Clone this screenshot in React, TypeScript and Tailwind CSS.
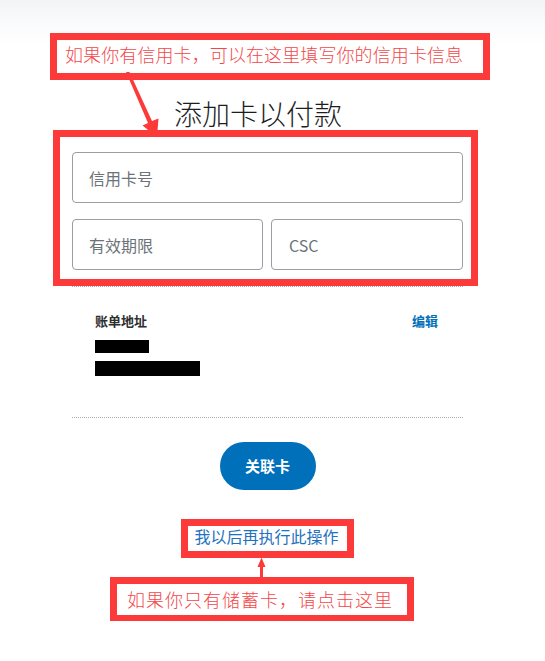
import React from "react";

const cjk = "font-['Noto_Sans_CJK_SC','Noto_Sans',sans-serif]";

export default function App() {
  return (
    <div
      className={`relative w-[545px] h-[661px] overflow-hidden bg-[linear-gradient(to_bottom,#f3f4f7_0px,#fafbfc_25px,#ffffff_45px)] ${cjk}`}
    >
      <div className="ml-[72px] w-[391px] flex flex-col">
        <h1 className="mt-[95px] h-[36px] leading-[36px] text-[28px] font-light text-[#1b1d1f] text-center pr-[19px]">
          添加卡以付款
        </h1>
        <input
          readOnly
          placeholder="信用卡号"
          className="mt-[21px] h-[51px] w-full border border-[#9a9da1] rounded-[4px] pl-[16px] text-[16px] outline-none placeholder:text-[#6c7378] bg-white"
        />
        <div className="mt-[16px] flex gap-[8px]">
          <input
            readOnly
            placeholder="有效期限"
            className="h-[51px] w-0 flex-1 border border-[#9a9da1] rounded-[4px] pl-[16px] text-[16px] outline-none placeholder:text-[#6c7378] bg-white"
          />
          <input
            readOnly
            placeholder="CSC"
            className="h-[51px] w-0 flex-1 border border-[#9a9da1] rounded-[4px] pl-[17px] text-[16px] outline-none placeholder:text-[#6c7378] bg-white"
          />
        </div>
        <div className="mt-[16px] border-t border-dotted border-[#a8abaf]" />
        <div className="pl-[23px] pr-[25px]">
          <div className="mt-[24px] flex justify-between items-center h-[20px] leading-[20px] text-[13px] font-semibold">
            <span className="text-[#2c2e2f]">账单地址</span>
            <span className="text-[#0070ba]">编辑</span>
          </div>
          <div className="mt-[9px] w-[54px] h-[13px] bg-black" />
          <div className="mt-[8px] w-[105px] h-[15px] bg-black" />
        </div>
        <div className="mt-[41px] border-t border-dotted border-[#a8abaf]" />
        <div className="mt-[24px] flex justify-center">
          <button className="w-[96px] h-[48px] rounded-full bg-[#0070ba] text-white text-[15px] font-bold">
            关联卡
          </button>
        </div>
        <div className="mt-[34px] flex justify-center">
          <span className="h-[24px] leading-[24px] text-[16px] text-[#1f72bd] pr-[2px]">
            我以后再执行此操作
          </span>
        </div>
      </div>

      {/* annotation overlays */}
      <div className="absolute left-[50px] top-[33px] w-[440px] h-[47px] border-[7px] border-[#fd3a3a] bg-white">
        <div className="pl-[8px] pt-[2px] h-[24px] leading-[24px] text-[18px] font-light text-[#f2484b] whitespace-nowrap tracking-[0.1px]">
          如果你有信用卡，可以在这里填写你的信用卡信息
        </div>
      </div>

      <div className="absolute left-[53px] top-[130px] w-[425px] h-[156px] border-[7px] border-[#fd3a3a]" />

      <div className="absolute left-[181px] top-[519px] w-[173px] h-[39px] border-[7px] border-[#fd3a3a]" />

      <div className="absolute left-[110px] top-[577px] w-[304px] h-[44px] border-[7px] border-b-[6px] border-[#fd3a3a] bg-white">
        <div className="pl-[10px] pt-[2px] h-[26px] leading-[26px] text-[18px] font-light text-[#f2484b] whitespace-nowrap tracking-[1px]">
          如果你只有储蓄卡，请点击这里
        </div>
      </div>

      <svg className="absolute left-0 top-0 pointer-events-none" width="545" height="661" viewBox="0 0 545 661">
        <polygon
          points="126,72 129.5,72 152,121 158.5,118.5 157,137 142.5,125.5 148,123"
          fill="#fd3a3a"
        />
        <polygon
          points="261.5,557.5 265.5,567 263,567 263,578 260,578 260,567 257.5,567"
          fill="#fd3a3a"
        />
      </svg>
    </div>
  );
}
